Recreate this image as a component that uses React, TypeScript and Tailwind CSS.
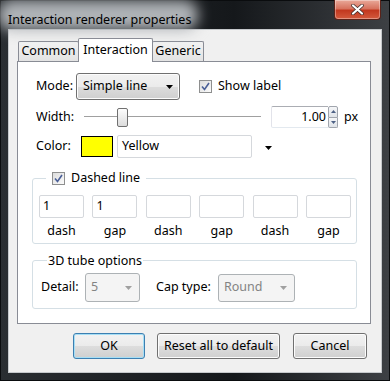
import React from 'react';

const font = "font-['Segoe_UI','Noto_Sans',sans-serif]";

const Check: React.FC = () => (
  <span className="w-[13px] h-[13px] border border-[#8e8f8f] bg-gradient-to-br from-[#dcdcdc] to-[#fbfbfb] flex items-center justify-center shrink-0">
    <svg width="9" height="9" viewBox="0 0 9 9">
      <path d="M1 4.5 L3.5 7.5 L8 1" fill="none" stroke="#4a5f97" strokeWidth="1.6" />
    </svg>
  </span>
);

const Arrow: React.FC<{ color?: string }> = ({ color = '#000' }) => (
  <svg width="7" height="4" viewBox="0 0 7 4">
    <path d="M0 0 H7 L3.5 4 Z" fill={color} />
  </svg>
);

const Btn: React.FC<{ w: string; def?: boolean; children: React.ReactNode }> = ({ w, def, children }) => (
  <div
    className={`${w} h-[26px] rounded-[3px] border flex items-center justify-center text-[12.5px] text-black bg-[linear-gradient(#f2f2f2_0%,#ebebeb_50%,#dddddd_51%,#cfcfcf_100%)] ${
      def ? 'border-[#3c7fb1] shadow-[inset_0_0_0_1px_#a6def5]' : 'border-[#707070] shadow-[inset_0_0_0_1px_#fcfcfc]'
    }`}
  >
    {children}
  </div>
);

export default function App() {
  return (
    <div className={`${font} w-[390px] h-[381px] flex flex-col px-[7px] pb-[7px] bg-[linear-gradient(90deg,#2a2e32_0%,#15181b_60%,#3d4044_100%)] border border-[#0a0c0e]`}>
      {/* title bar */}
      <div className="h-[28px] flex items-start justify-between relative">
        <div className="relative mt-[5px]">
          <div className="absolute -left-[10px] -top-[6px] w-[200px] h-[30px] rounded-[14px] bg-[#b0b4b8] blur-[7px]" />
          <span className="relative text-[12.5px] text-black leading-[18px]">Interaction renderer properties</span>
        </div>
        <div className="w-[47px] h-[20px] -mt-[1px] mr-[1px] rounded-b-[4px] border border-[#5a2219] border-t-0 bg-[linear-gradient(#e9a99a_0%,#d7735f_45%,#c2381f_55%,#d35a3d_100%)] flex items-center justify-center shadow-[inset_0_0_0_1px_rgba(255,255,255,0.35)]">
          <svg width="13" height="11" viewBox="0 0 13 11">
            <path d="M2 1.5 L11 9.5 M11 1.5 L2 9.5" stroke="#3a2a28" strokeWidth="3.6" strokeLinecap="round" />
            <path d="M2 1.5 L11 9.5 M11 1.5 L2 9.5" stroke="#fff" strokeWidth="2.2" strokeLinecap="round" />
          </svg>
        </div>
      </div>

      {/* client area */}
      <div className="flex-1 border border-[#c6c9cc] bg-[#f0f0f0] flex flex-col pt-[8px] text-[12.5px] text-black">
        {/* tabs */}
        <div className="flex items-end h-[23px] pl-[9px]">
          <div className="w-[61px] h-[20px] border border-[#898c95] border-b-0 bg-[linear-gradient(#f2f2f2,#e3e3e3)] flex items-center justify-center rounded-t-[2px]">Common</div>
          <div className="w-[75px] border border-[#898c95] border-b-0 -mx-[1px] bg-white relative z-10 flex items-start pt-[2px] justify-center rounded-t-[2px] mb-[-1px] h-[24px]">Interaction</div>
          <div className="w-[52px] h-[20px] border border-[#898c95] border-b-0 bg-[linear-gradient(#f2f2f2,#e3e3e3)] flex items-center justify-center rounded-t-[2px]">Generic</div>
        </div>

        {/* panel */}
        <div className="ml-[8px] w-[354px] h-[263px] border border-[#898c95] bg-white flex flex-col pl-[18px]">
          {/* mode */}
          <div className="flex items-center mt-[11px] h-[27px]">
            <span className="w-[40px]">Mode:</span>
            <div className="w-[104px] h-[27px] rounded-[3px] border border-[#707070] bg-[linear-gradient(#f2f2f2_0%,#ebebeb_50%,#dddddd_51%,#cfcfcf_100%)] shadow-[inset_0_0_0_1px_#fcfcfc] flex items-center justify-between pl-[6px] pr-[6px]">
              <span>Simple line</span>
              <Arrow />
            </div>
            <div className="ml-[19px] flex items-center gap-[6px]">
              <Check />
              <span>Show label</span>
            </div>
          </div>

          {/* width */}
          <div className="flex items-center mt-[6px] h-[22px]">
            <span className="w-[48px]">Width:</span>
            <div className="w-[177px] h-[20px] flex items-center relative">
              <div className="w-full h-[2px] border-t border-[#a0a0a0] border-b border-b-white" />
              <div className="absolute left-[33px] top-[1px] w-[11px] h-[19px] rounded-[2px] border border-[#707070] bg-[linear-gradient(#fdfdfd,#dcdcdc)]" />
            </div>
            <div className="ml-[10px] w-[57px] h-[22px] border border-[#abadb3] border-r-0 border-l-[#e2e3ea] border-b-[#e3e9ef] rounded-l-[2px] flex items-center justify-end pr-[2px]">1.00</div>
            <div className="w-[10px] h-[22px] flex flex-col">
              <div className="flex-1 border border-[#a0a5ad] rounded-t-[2px] bg-[linear-gradient(#f5f6f8,#dfe3e8)] flex items-center justify-center">
                <svg width="5" height="3" viewBox="0 0 5 3"><path d="M0 3 L2.5 0 L5 3 Z" fill="#4d6185" /></svg>
              </div>
              <div className="flex-1 border border-t-0 border-[#a0a5ad] rounded-b-[2px] bg-[linear-gradient(#f5f6f8,#dfe3e8)] flex items-center justify-center">
                <svg width="5" height="3" viewBox="0 0 5 3"><path d="M0 0 L5 0 L2.5 3 Z" fill="#4d6185" /></svg>
              </div>
            </div>
            <span className="ml-[6px]">px</span>
          </div>

          {/* color */}
          <div className="flex items-center mt-[7px] h-[23px]">
            <span className="w-[45px]">Color:</span>
            <div className="w-[32px] h-[21px] border border-black bg-[#ffff00]" />
            <div className="ml-[4px] w-[135px] h-[23px] border border-[#d5d8dc] rounded-[2px] flex items-center pl-[4px]">Yellow</div>
            <div className="ml-[13px] mt-[3px] flex"><Arrow /></div>
          </div>

          {/* dashed line group */}
          <fieldset className="mt-[13px] -ml-[4px] w-[325px] border border-[#d5dfe5] rounded-[3px] pl-[6px] pb-[5px]">
            <legend className="ml-[7px] px-[6px] flex items-center gap-[6px] h-[15px]">
              <Check />
              <span>Dashed line</span>
            </legend>
            <div className="grid grid-cols-[repeat(6,45px)] gap-x-[8.4px] mt-[9px]">
              {['1', '1', '', '', '', ''].map((v, i) => (
                <div key={i} className="h-[23px] border border-[#d5d8dc] rounded-[2px] flex items-center pl-[3px]">{v}</div>
              ))}
              {['dash', 'gap', 'dash', 'gap', 'dash', 'gap'].map((l, i) => (
                <div key={'l' + i} className="text-center mt-[5px] leading-[15px]">{l}</div>
              ))}
            </div>
          </fieldset>

          {/* 3D tube options */}
          <fieldset className="mt-[9px] -ml-[4px] w-[325px] border border-[#d5dfe5] rounded-[3px] pl-[8px] pb-[6px]">
            <legend className="ml-[6px] px-[1px] leading-[15px]">3D tube options</legend>
            <div className="flex items-center mt-[5px] h-[29px]">
              <span className="w-[44px]">Detail:</span>
              <div className="w-[55px] h-[29px] rounded-[3px] border border-[#adb2b5] bg-[#f4f4f4] flex items-center justify-between pl-[5px] pr-[7px] text-[#838383]">
                <span>5</span>
                <Arrow color="#a0a0a0" />
              </div>
              <span className="ml-[16px] w-[62px]">Cap type:</span>
              <div className="w-[77px] h-[28px] rounded-[3px] border border-[#adb2b5] bg-[#f4f4f4] flex items-center justify-between pl-[5px] pr-[7px] text-[#838383]">
                <span>Round</span>
                <Arrow color="#a0a0a0" />
              </div>
            </div>
          </fieldset>
        </div>

        {/* buttons */}
        <div className="flex mt-[9px] pl-[64px]">
          <Btn w="w-[72px]" def>OK</Btn>
          <div className="ml-[12px]"><Btn w="w-[123px]">Reset all to default</Btn></div>
          <div className="ml-[13px]"><Btn w="w-[74px]">Cancel</Btn></div>
        </div>
      </div>
    </div>
  );
}
